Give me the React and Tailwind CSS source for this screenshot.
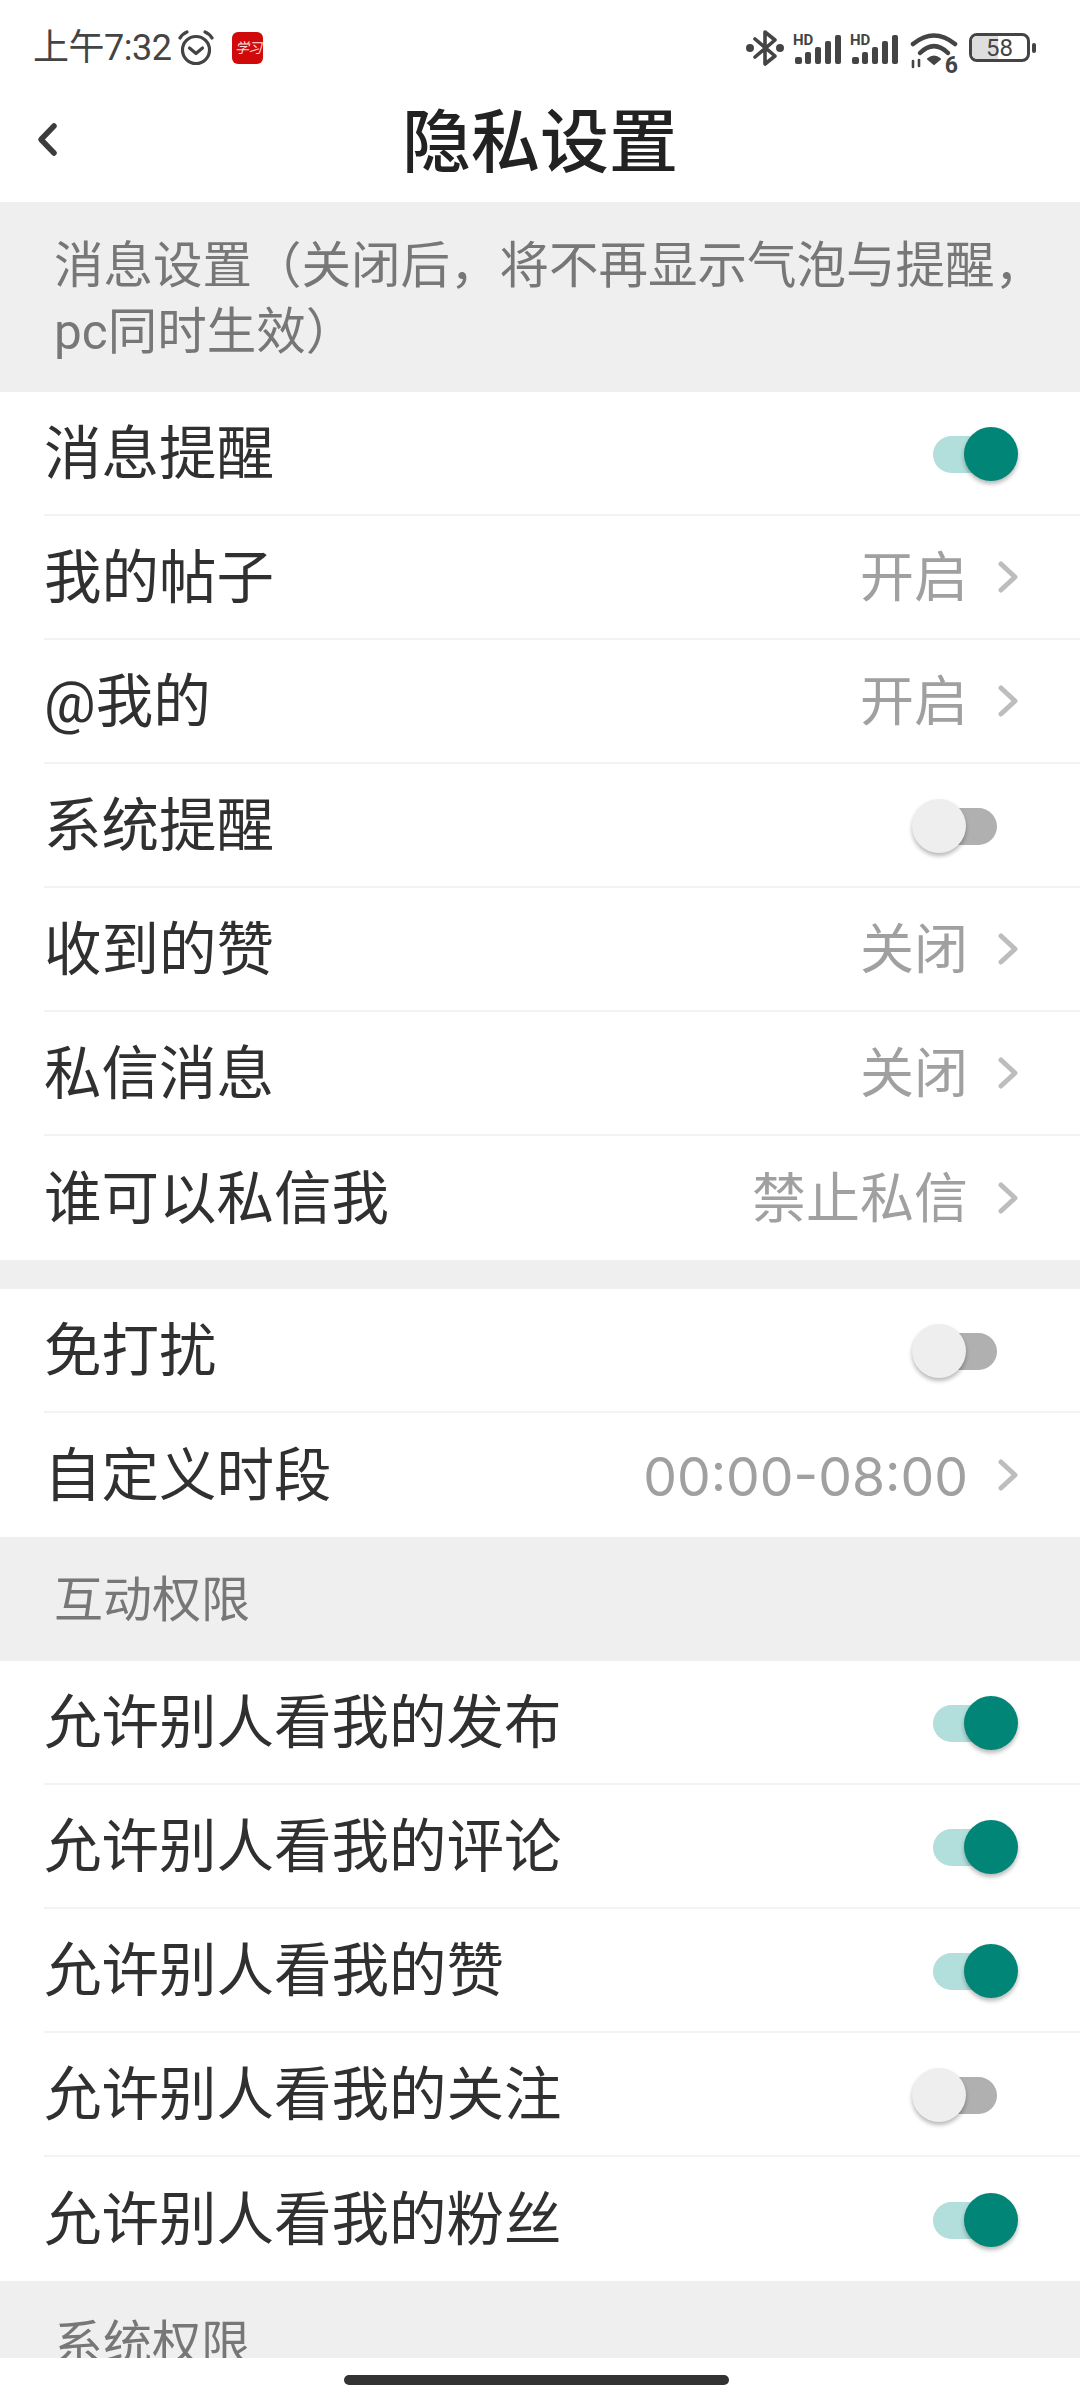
const FONT = "font-['Roboto','Noto_Sans_CJK_SC',sans-serif]";

function Chevron() {
  return (
    <svg width="20" height="32" viewBox="0 0 20 32" className="ml-[30px] mr-[2px] shrink-0">
      <path d="M3 3 L17 16 L3 29" fill="none" stroke="#bdbdbd" strokeWidth="5" strokeLinecap="round" strokeLinejoin="round" />
    </svg>
  );
}

function Toggle({ on }) {
  if (on) {
    return (
      <div className="relative w-[85px] h-[54px] mt-[2px] mr-[2px] flex items-center">
        <div className="w-[70px] h-[37px] rounded-full bg-[#b2dfdb]" />
        <div className="absolute right-0 top-0 w-[54px] h-[54px] rounded-full bg-[#008577] shadow-[0_3px_4px_rgba(0,0,0,0.28)]" />
      </div>
    );
  }
  return (
    <div className="relative w-[85px] h-[54px] mt-[2px] mr-[23px] flex items-center justify-end">
      <div className="w-[70px] h-[37px] rounded-full bg-[#b0b0b0]" />
      <div className="absolute left-0 top-0 w-[54px] h-[54px] rounded-full bg-[#eeeeee] shadow-[0_3px_4px_rgba(0,0,0,0.28)]" />
    </div>
  );
}

function Row({ label, value, toggle, last, digits }) {
  return (
    <div className="h-[124px] pl-[44px] bg-white">
      <div className={`h-full flex items-center justify-between pr-[60px] ${last ? "" : "border-b-2 border-[#f3f3f3]"}`}>
        <span className="text-[57.5px] leading-none text-[#303030] whitespace-nowrap pt-[3px]">{label}</span>
        {toggle !== undefined ? (
          <Toggle on={toggle} />
        ) : (
          <div className="flex items-center">
            <span className={`${digits ? "text-[53.5px] font-['Inter',sans-serif]" : "text-[54px]"} leading-none text-[#a0a0a0] whitespace-nowrap pt-[3px]`}>{value}</span>
            <Chevron />
          </div>
        )}
      </div>
    </div>
  );
}

function Section({ children }) {
  return <div className="bg-[#efefef] h-[124px] pl-[54px] pt-[4px] flex items-center text-[49px] text-[#777777]">{children}</div>;
}

function Signal() {
  return (
    <div className="relative w-[48px] h-[32px]">
      <span className="absolute left-0 top-0 text-[15px] leading-none font-bold text-[#444]">HD</span>
      <svg width="48" height="32" viewBox="0 0 48 32" className="absolute inset-0" fill="#444">
        <rect x="2" y="24" width="7" height="7" rx="2" />
        <rect x="12" y="19" width="6" height="12" rx="2" />
        <rect x="22" y="14" width="6" height="17" rx="2" />
        <rect x="32" y="8" width="6" height="23" rx="2" />
        <rect x="42" y="2" width="6" height="29" rx="2" />
      </svg>
    </div>
  );
}

function Wifi() {
  return (
    <div className="relative w-[48px] h-[40px]">
      <svg width="48" height="40" viewBox="0 0 48 40" className="absolute inset-0" fill="none" stroke="#444" strokeWidth="4.5" strokeLinecap="round">
        <path d="M3 13 Q24 -4 45 13" />
        <path d="M10 22 Q24 8 38 22" />
        <path d="M18 28 Q24 23 30 28 L24 33 Z" fill="#444" stroke="#444" strokeWidth="2" strokeLinejoin="round" />
        <path d="M3 30 L3 36" strokeWidth="2.6" />
        <path d="M9 29 L9 35" strokeWidth="2.6" />
      </svg>
      <span className="absolute right-0 top-[23px] text-[23px] leading-none font-bold text-[#444]">6</span>
    </div>
  );
}

function StatusBar() {
  return (
    <div className="h-[96px] pt-[30px] pl-[33px] pr-[44px] flex items-start justify-between">
      <div className="flex items-center h-[36px] text-[#444]">
        <span className="text-[36px] leading-none whitespace-nowrap tracking-[-0.5px]">上午7:32</span>
        <svg width="38" height="36" viewBox="0 0 38 36" className="ml-[6px]" fill="none" stroke="#444" strokeWidth="3.2" strokeLinecap="round" strokeLinejoin="round">
          <circle cx="19" cy="20" r="13.5" />
          <path d="M12.5 18 L19 23.5 L25.5 18" />
          <path d="M3 8 Q6 3.5 10 2" />
          <path d="M35 8 Q32 3.5 28 2" />
        </svg>
        <div className="ml-[17px] w-[31px] h-[32px] rounded-[6px] bg-[#d00a0a] flex items-center justify-center text-[14px] tracking-[-1px] leading-none text-[#ffdcdc] italic whitespace-nowrap">学习</div>
      </div>
      <div className="flex items-start h-[40px] text-[#444]">
        <svg width="38" height="38" viewBox="0 0 38 38" fill="none" stroke="#444" strokeWidth="3.6" strokeLinejoin="round" strokeLinecap="round" className="mt-[-1px]">
          <path d="M9 10 L29 27 L19 35 L19 3 L29 11 L9 28" />
          <circle cx="4" cy="19" r="2.2" fill="#444" />
          <circle cx="34" cy="19" r="2.2" fill="#444" />
        </svg>
        <div className="ml-[9px] mt-[3px]"><Signal /></div>
        <div className="ml-[9px] mt-[3px]"><Signal /></div>
        <div className="ml-[12px] mt-[1px]"><Wifi /></div>
        <div className="flex items-center ml-[11px] mt-[3px]">
          <div className="relative w-[61px] h-[29px] rounded-[8px] border-[3px] border-[#444] overflow-hidden">
            <div className="absolute left-0 top-0 bottom-0 w-[26px] bg-[#dedede]" />
            <span className="absolute inset-0 flex items-center justify-center text-[24px] leading-none text-[#444]">58</span>
          </div>
          <div className="ml-[2px] w-[4px] h-[10px] rounded-full bg-[#444]" />
        </div>
      </div>
    </div>
  );
}

export default function App() {
  return (
    <div className={`w-[1080px] h-[2401px] overflow-hidden bg-white flex flex-col ${FONT}`}>
      <StatusBar />
      <div className="h-[106px] pb-[12px] relative flex items-center justify-center">
        <svg width="28" height="40" viewBox="0 0 28 40" className="absolute left-[36px] top-[24px]">
          <path d="M18 6 L5 19.5 L18 33" fill="none" stroke="#3c3c3c" strokeWidth="5.5" strokeLinecap="round" strokeLinejoin="round" />
        </svg>
        <span className="text-[69px] leading-none font-medium text-[#222222]">隐私设置</span>
      </div>
      <div className="h-[2156px] overflow-hidden">
        <div className="bg-[#efefef] h-[190px] pl-[54px] pt-[4px] flex items-center text-[49.5px] leading-[66px] text-[#777777] whitespace-nowrap">
          <div>消息设置（关闭后，将不再显示气泡与提醒，<br />pc同时生效）</div>
        </div>
        <Row label="消息提醒" toggle={true} />
        <Row label="我的帖子" value="开启" />
        <Row label="@我的" value="开启" />
        <Row label="系统提醒" toggle={false} />
        <Row label="收到的赞" value="关闭" />
        <Row label="私信消息" value="关闭" />
        <Row label="谁可以私信我" value="禁止私信" last />
        <div className="h-[29px] bg-[#efefef]" />
        <Row label="免打扰" toggle={false} />
        <Row label="自定义时段" value="00:00-08:00" digits last />
        <Section>互动权限</Section>
        <Row label="允许别人看我的发布" toggle={true} />
        <Row label="允许别人看我的评论" toggle={true} />
        <Row label="允许别人看我的赞" toggle={true} />
        <Row label="允许别人看我的关注" toggle={false} />
        <Row label="允许别人看我的粉丝" toggle={true} last />
        <Section>系统权限</Section>
      </div>
      <div className="flex-1 flex justify-center pt-[17px]">
        <div className="w-[385px] h-[10px] mr-[7px] rounded-full bg-[#333333]" />
      </div>
    </div>
  );
}
